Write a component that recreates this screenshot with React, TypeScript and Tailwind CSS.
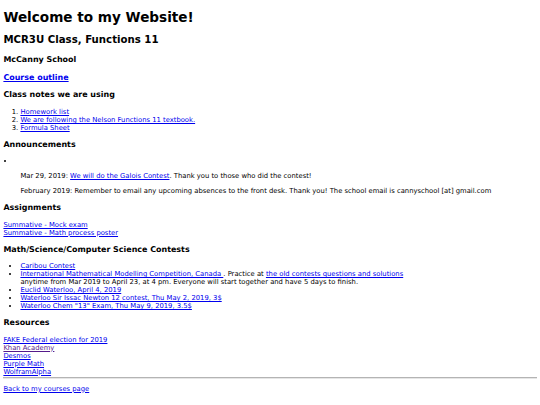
export default function App() {
  const link = "text-[#0000ee] underline";
  const h3 = "text-[7.96px] leading-[1.215] font-bold my-[7.96px]";
  return (
    <div
      className="bg-white text-black text-[6.8px] leading-[8px] px-[3.4px] pb-[4px] min-h-[405px] overflow-hidden"
      style={{ fontFamily: '"DejaVu Sans", Verdana, sans-serif' }}
    >
      <h1 className="text-[13.6px] leading-[1.215] font-bold mt-[8.6px] mb-[9.1px]">Welcome to my Website!</h1>
      <h2 className="text-[10.2px] leading-[1.215] font-bold my-[8.5px]">MCR3U Class, Functions 11</h2>
      <h3 className={h3}>McCanny School</h3>
      <h3 className={h3}>
        <a href="#" className={link}>Course outline</a>
      </h3>
      <h3 className={h3}>Class notes we are using</h3>
      <ol className="list-decimal pl-[17px] my-[6.8px]">
        <li><a href="#" className={link}>Homework list</a></li>
        <li><a href="#" className={link}>We are following the Nelson Functions 11 textbook.</a></li>
        <li><a href="#" className={link}>Formula Sheet</a></li>
      </ol>

      <h3 className={h3}>Announcements</h3>
      <div className="my-[6.8px]">
        <div className="h-[8px] flex items-center">
          <span className="block w-[2px] h-[2px] rounded-full bg-black ml-[0.5px]" />
        </div>
        <div className="pl-[17px]">
          <p className="my-[6.8px]">
            Mar 29, 2019: <a href="#" className={link}>We will do the Galois Contest</a>. Thank you to those who did the contest!
          </p>
          <p className="my-[6.8px]">
            February 2019: Remember to email any upcoming absences to the front desk. Thank you! The school email is cannyschool [at] gmail.com
          </p>
        </div>
      </div>

      <h3 className={h3}>Assignments</h3>
      <p className="my-[6.8px]">
        <a href="#" className={link}>Summative - Mock exam</a>
        <br />
        <a href="#" className={link}>Summative - Math process poster</a>
      </p>

      <h3 className={h3}>Math/Science/Computer Science Contests</h3>
      <ul className="list-disc pl-[17px] my-[6.8px]">
        <li><a href="#" className={link}>Caribou Contest</a></li>
        <li>
          <a href="#" className={link}>International Mathematical Modelling Competition, Canada </a> . Practice at{" "}
          <a href="#" className={link}>the old contests questions and solutions</a>
          <br />
          anytime from Mar 2019 to April 23, at 4 pm. Everyone will start together and have 5 days to finish.
        </li>
        <li><a href="#" className={link}>Euclid Waterloo, April 4, 2019</a></li>
        <li><a href="#" className={link}>Waterloo Sir Issac Newton 12 contest, Thu May 2, 2019, 3$</a></li>
        <li><a href="#" className={link}>Waterloo Chem "13" Exam, Thu May 9, 2019, 3.5$</a></li>
      </ul>

      <h3 className={h3}>Resources</h3>
      <div className="mt-[7.5px]">
        <a href="#" className={link}>FAKE Federal election for 2019</a>
        <br />
        <a href="#" className="text-[#551a8b] underline">Khan Academy</a>
        <br />
        <a href="#" className={link}>Desmos</a>
        <br />
        <a href="#" className={link}>Purple Math</a>
        <br />
        <a href="#" className={link}>WolframAlpha</a>
      </div>
      <hr className="mt-[1px] mb-[6px] border-0 border-t border-t-[#b4b4b4] border-b border-b-[#e6e6e6]" />
      <a href="#" className={link}>Back to my courses page</a>
    </div>
  );
}
